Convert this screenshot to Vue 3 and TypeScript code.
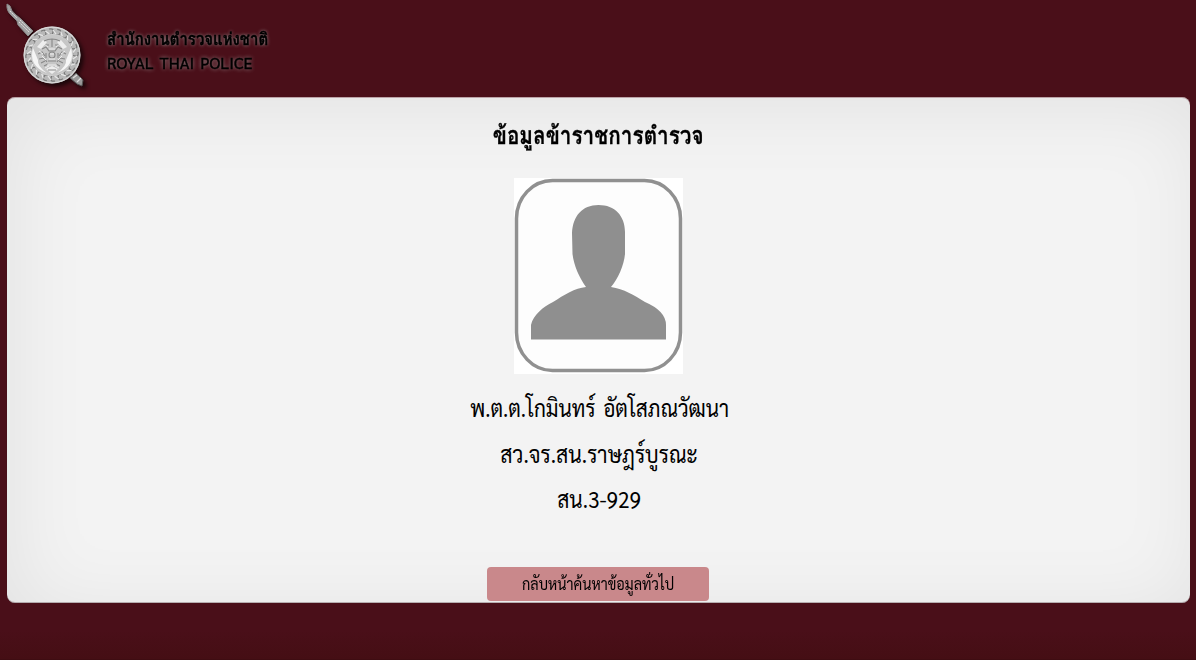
<script setup lang="ts">
interface Officer {
  name: string
  position: string
  code: string
}

const officer: Officer = {
  name: 'พ.ต.ต.โกมินทร์ อัตโสภณวัฒนา',
  position: 'สว.จร.สน.ราษฎร์บูรณะ',
  code: 'สน.3-929',
}

// Ornaments of the emblem, spaced evenly round its rim
const beads: number[] = Array.from({ length: 20 }, (_, i) => i * 18)
</script>

<template>
  <div class="page">
    <header class="header">
      <svg class="emblem" viewBox="0 0 100 97" aria-hidden="true">
        <g>
          <path d="M7 4L10 6Q11 11 16 15L21 19L33 31L28 36L18 25L17 21L12 16Q6 11 7 4Z" fill="#a2a2a2" stroke="#888" stroke-width="1" />
          <path d="M10 11L17 18M19 22L29 32M20 20L31 31" stroke="#ddd" stroke-width="1" stroke-dasharray="2 1" />
          <path d="M70 78L76 73L83 80L82 86L77 84Z" fill="#999" stroke="#555" stroke-width="1" />
          <path d="M73 78L77 75M77 82L81 78" stroke="#ddd" stroke-width="1.2" />
        </g>
        <circle cx="52" cy="55" r="28.5" fill="#b8b8b8" />
        <circle cx="52" cy="55" r="27.8" fill="none" stroke="#d8d8d8" stroke-width="1.2" />
        <g v-for="a in beads" :key="a" :transform="`rotate(${a} 52 55)`" fill="none" stroke-width="1.2">
          <path d="M49 29Q54 28 53 32T50 34" stroke="#777" />
          <path d="M53 30L56 34" stroke="#e8e8e8" />
        </g>
        <circle cx="52" cy="55" r="20.5" fill="#c6c6c6" stroke="#d0d0d0" stroke-width="1" />
        <path d="M33 48Q28 66 47 73Q37 66 38 60ZM71 48Q76 66 57 73Q67 66 66 60Z" fill="#f5f5f5" />
        <path d="M37 47L43 40L47 42L41 49ZM67 47L61 40L57 42L63 49ZM46 69L52 66L58 69L52 74Z" fill="#eee" />
        <g fill="none" stroke="#888" stroke-width="1.1">
          <path d="M44 41Q52 37 60 41M45 45H49M55 45H59M42 49L46 47L49 51L55 51L58 47L62 49M38 54L42 52L45 56M59 56L62 52L66 54M39 59L44 58L47 62M57 62L60 58L65 59M48 61H56M44 66L48 64M56 64L60 66M48 70H56M52 39V47" />
          <circle cx="52" cy="55" r="3" />
          <path d="M41 63L45 61M63 63L59 61M46 53V58M58 53V58" />
        </g>
        <g fill="none" stroke="#eee" stroke-width="1">
          <path d="M44 44L48 47M60 44L56 47M39 51L43 54M65 51L61 54M42 56L46 60M62 56L58 60M49 49H55M49 59H55M47 65H57M50 54H54M45 68L49 66M59 68L55 66" />
        </g>
      </svg>
      <div class="brand">
        <div class="brand-th"><span>สำนักงานตำรวจแห่งชาติ</span></div>
        <div class="brand-en"><span>ROYAL THAI POLICE</span></div>
      </div>
    </header>

    <main class="card">
      <h1><span>ข้อมูลข้าราชการตำรวจ</span></h1>
      <svg class="photo" viewBox="0 0 169 196" role="img">
        <rect width="169" height="196" fill="#fff" />
        <rect x="2.500" y="2.500" width="164" height="190" rx="36" ry="38" fill="#fdfdfd" stroke="#909090" stroke-width="3.500" />
        <path d="M84.500 27C101 27 111 38 111 54V76C110 87 104 101 97 109C110 111 120 117 131 124Q152 133 152 147V161.500H17V147C19 137 29 129 39 124C50 117 61 110 72 109C65 99 60 88 58.500 76L58 55C59 38 68 27 84.500 27Z" fill="#8f8f8f" />
      </svg>
      <p class="line name"><span>{{ officer.name }}</span></p>
      <p class="line position"><span>{{ officer.position }}</span></p>
      <p class="line code"><span>{{ officer.code }}</span></p>
      <button class="back" type="button"><span>กลับหน้าค้นหาข้อมูลทั่วไป</span></button>
    </main>
  </div>
</template>

<style>
body { background: #4a0f19; }
</style>

<style scoped>
.page {
  height: 660px;
  overflow: hidden;
  box-sizing: border-box;
  padding: 0 6px 0 7px;
  background: linear-gradient(#4a0f19 0, #4a0f19 630px, #450e14 659px, #390b10 660px);
  color: #000;
  font-family: Sarabun, "Noto Sans Thai Looped", "Noto Sans", sans-serif;
}
span { display: inline-block; }
.header { display: flex; height: 97px; }
.emblem {
  width: 100px;
  height: 97px;
  margin-left: -7px;
  flex: none;
  filter: drop-shadow(3px 3px 2px rgba(0, 0, 0, .65));
}
.brand {
  padding: 26px 0 0 7px;
  text-shadow: 0 0 4px #aaa;
  white-space: nowrap;
}
.brand span { transform-origin: 0 50%; }
.brand-th { font-family: Loma, Sarabun, "Noto Sans", sans-serif; font-size: 17px; line-height: 25px; font-weight: 700; -webkit-text-stroke: .4px #000; }
.brand-th span { transform: scaleX(.88); }
.brand-en { font-size: 16px; line-height: 24px; word-spacing: 2px; -webkit-text-stroke: .4px #000; }
.brand-en span { transform: scaleX(1.019); }
.card {
  display: flex;
  flex-direction: column;
  align-items: center;
  box-sizing: border-box;
  height: 506px;
  padding-top: 15px;
  border-radius: 8px;
  background: #f3f3f3;
  box-shadow: inset 0 1px 0 rgba(120, 60, 70, .4), inset 0 -1px 0 rgba(60, 30, 35, .3), inset 8px 10px 80px rgba(0, 0, 0, .07);
}
h1 { margin: 0; height: 66px; font-family: Loma, Sarabun, "Noto Sans", sans-serif; font-size: 25px; line-height: 46px; font-weight: 700; white-space: nowrap; -webkit-text-stroke: .3px #000; }
h1 span { transform: scaleX(.829); }
.photo { width: 169px; height: 196px; flex: none; }
.line {
  margin: 0;
  height: 45.500px;
  line-height: 42px;
  font-size: 24px;
  white-space: nowrap;
}
.name { margin-top: 12px; word-spacing: 3px; }
.name span { transform: translateX(1px) scaleX(.865); }
.position span { transform: translateX(1px) scaleX(.881); }
.code span { transform: translateX(1px) scaleX(.87); }
.back {
  width: 222px;
  height: 34px;
  margin: 44px 1px 0 0;
  padding: 0;
  border: 0;
  border-radius: 4px;
  background: #c9888b;
  color: #000;
  font: inherit;
  font-size: 16px;
  line-height: 34px;
  flex: none;
}
.back span { transform: scaleX(.905); }
</style>
